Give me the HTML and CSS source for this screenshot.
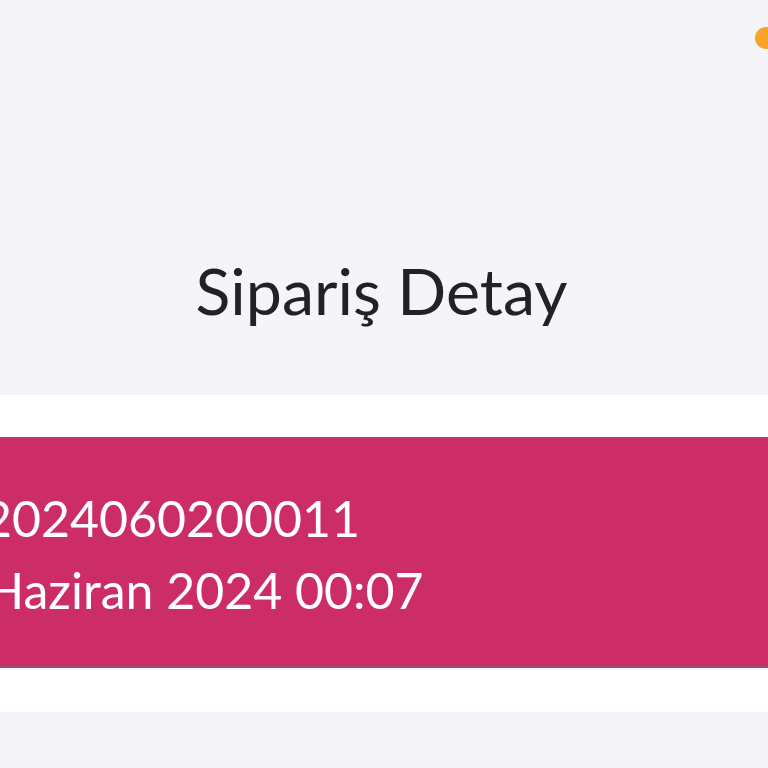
FILE: index.html
```html
<!DOCTYPE html>
<html lang="tr">
<head>
<meta charset="utf-8">
<link rel="stylesheet" href="styles.css">
</head>
<body>
<div class="page">
  <header class="top">
    <span class="dot"></span>
    <h1 class="title">Sipariş Detay</h1>
  </header>
  <div class="spacer"></div>
  <section class="band">
    <div class="lines">
      <div class="line l1">2024060200011</div>
      <div class="line l2">Haziran 2024 00:07</div>
    </div>
  </section>
  <div class="spacer spacer-bottom"></div>
  <div class="rest"></div>
</div>
</body>
</html>
```
FILE: styles.css
```css
html, body {
  margin: 0;
  padding: 0;
}
body {
  font-family: Lato, "Open Sans", sans-serif;
  background: #f5f4f9;
  overflow: hidden;
}
.page {
  width: 768px;
  height: 768px;
  display: flex;
  flex-direction: column;
  overflow: hidden;
}
.top {
  position: relative;
  height: 395px;
  background: #f5f4f9;
  display: flex;
  justify-content: center;
  box-sizing: border-box;
  padding-top: 250px;
}
.dot {
  position: absolute;
  left: 755px;
  top: 27px;
  width: 22px;
  height: 22px;
  border-radius: 50%;
  background: #f6a429;
}
.title {
  margin: 0 0 0 -5px;
  font-weight: 400;
  font-size: 64.5px;
  line-height: 80px;
  color: #212126;
  height: 80px;
}
.spacer {
  height: 42px;
  background: #ffffff;
  flex: none;
}
.spacer-bottom {
  height: 44px;
}
.band {
  flex: none;
  height: 231px;
  background: #cc2d66;
  border-top: 1px solid #a8456a;
  border-bottom: 2px solid #9c4c6c;
  box-sizing: border-box;
  display: flex;
  align-items: flex-start;
  padding-top: 44px;
}
.lines {
  display: flex;
  flex-direction: column;
}
.line {
  color: #ffffff;
  font-size: 50px;
  line-height: 72px;
  white-space: nowrap;
}
.l1 {
  margin-left: -17px;
}
.l2 {
  margin-left: -14px;
}
.rest {
  flex: 1;
  background: #f5f4f9;
}
```
